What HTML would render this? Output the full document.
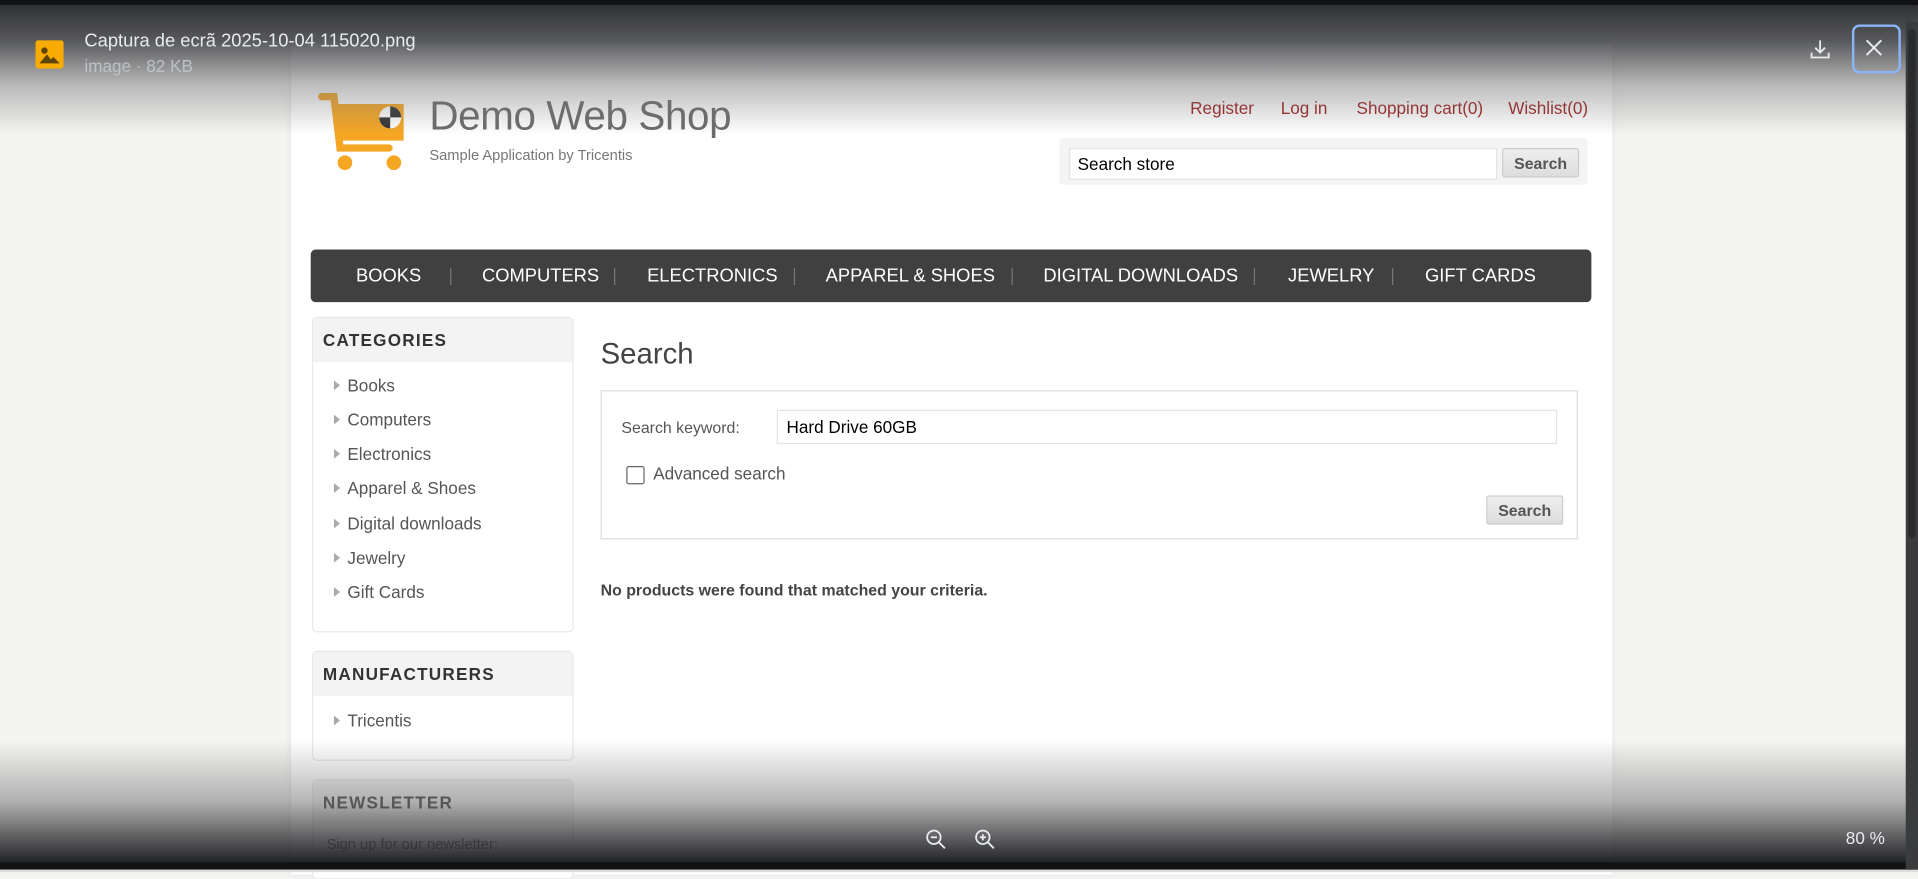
<!DOCTYPE html>
<html><head><meta charset="utf-8"><style>
html,body{margin:0;padding:0;width:1918px;height:872px;overflow:hidden;background:#f4f4f2}
#w{position:absolute;left:0;top:0;width:1568px;height:713px;transform:scale(1.2232);transform-origin:0 0;font-family:"Liberation Sans",Arial,sans-serif;background:#f4f4f2}
.a{position:absolute}
.page{left:238px;top:35px;width:1080px;height:680px;background:#fff;box-shadow:0 0 6px rgba(0,0,0,.08)}
.lnk{color:#9e1d1d;font-size:14px;top:80px}
.nav{left:254px;top:204px;width:1047px;height:43px;background:#404040;border-radius:4px}
.nav span{position:absolute;top:13px;color:#fff;font-size:15px}
.sep{position:absolute;top:15px;width:1px;height:14px;background:#777}
.blk{left:255px;width:212px;border:1px solid #e8e8e8;border-radius:4px;background:#fff}
.bh{height:36px;background:#f3f3f3;font-weight:bold;font-size:14px;letter-spacing:1px;color:#333;padding:10px 0 0 8px;box-sizing:border-box}
.it{position:absolute;left:28px;font-size:14px;color:#555}
.it:before{content:"";position:absolute;left:-11px;top:4px;border-left:5px solid #aaa;border-top:4px solid transparent;border-bottom:4px solid transparent}
.btn{background:linear-gradient(#eee,#ddd);border:1px solid #ccc;border-radius:2px;font-weight:bold;color:#555;font-size:13px;text-align:center;box-sizing:border-box;padding-top:4px}
</style></head><body><div id="w">
<div class="a page"></div>
<svg class="a" style="left:260px;top:75px" width="72" height="66" viewBox="0 0 72 66">
<path d="M3 4h10l5 42h40" fill="none" stroke="#f5a623" stroke-width="6" stroke-linecap="round"/>
<path d="M13 10h57v30H18z" fill="#f5a623"/>
<circle cx="22" cy="58" r="6" fill="#f5a623"/><circle cx="62" cy="58" r="6" fill="#f5a623"/>
<circle cx="59" cy="21" r="9" fill="#fff"/><path d="M59 12a9 9 0 0 1 9 9h-9zM59 21v9a9 9 0 0 1-9-9z" fill="#333"/>
</svg>
<div class="a" style="left:351px;top:76px;font-size:33px;color:#6a6a6a;letter-spacing:-0.3px">Demo Web Shop</div>
<div class="a" style="left:351px;top:120px;font-size:12px;color:#777">Sample Application by Tricentis</div>
<div class="a lnk" style="left:973px">Register</div>
<div class="a lnk" style="left:1047px">Log in</div>
<div class="a lnk" style="left:1109px">Shopping cart(0)</div>
<div class="a lnk" style="left:1233px">Wishlist(0)</div>
<div class="a" style="left:866px;top:113px;width:432px;height:38px;background:#f4f4f4;border-radius:3px"></div>
<div class="a" style="left:874px;top:121px;width:350px;height:26px;background:#fff;border:1px solid #e3e3e3;box-sizing:border-box;font-size:14px;padding:4px 6px;color:#000">Search store</div>
<div class="a btn" style="left:1228px;top:121px;width:63px;height:24px">Search</div>
<div class="a nav">
<span style="left:37px">BOOKS</span><i class="sep" style="left:114px"></i>
<span style="left:140px">COMPUTERS</span><i class="sep" style="left:248px"></i>
<span style="left:275px">ELECTRONICS</span><i class="sep" style="left:395px"></i>
<span style="left:421px">APPAREL &amp; SHOES</span><i class="sep" style="left:573px"></i>
<span style="left:599px">DIGITAL DOWNLOADS</span><i class="sep" style="left:771px"></i>
<span style="left:799px">JEWELRY</span><i class="sep" style="left:884px"></i>
<span style="left:911px">GIFT CARDS</span>
</div>
<div class="a blk" style="top:259px;height:256px"><div class="bh">CATEGORIES</div>
<div class="it" style="top:47px">Books</div><div class="it" style="top:75px">Computers</div><div class="it" style="top:103px">Electronics</div><div class="it" style="top:131px">Apparel &amp; Shoes</div><div class="it" style="top:160px">Digital downloads</div><div class="it" style="top:188px">Jewelry</div><div class="it" style="top:216px">Gift Cards</div></div>
<div class="a blk" style="top:532px;height:88px"><div class="bh">MANUFACTURERS</div><div class="it" style="top:48px">Tricentis</div></div>
<div class="a blk" style="top:637px;height:80px"><div class="bh">NEWSLETTER</div><div style="position:absolute;left:11px;top:45px;font-size:12px;color:#555">Sign up for our newsletter:</div></div>
<div class="a" style="left:491px;top:276px;font-size:24px;color:#444">Search</div>
<div class="a" style="left:491px;top:319px;width:799px;height:122px;border:1px solid #ddd;box-sizing:border-box"></div>
<div class="a" style="left:508px;top:342px;font-size:13px;color:#555">Search keyword:</div>
<div class="a" style="left:635px;top:335px;width:638px;height:28px;border:1px solid #e3e3e3;box-sizing:border-box;font-size:14px;padding:5px 7px;color:#000">Hard Drive 60GB</div>
<div class="a" style="left:512px;top:381px;width:13px;height:13px;border:1px solid #666;border-radius:2px"></div>
<div class="a" style="left:534px;top:379px;font-size:14px;color:#555">Advanced search</div>
<div class="a btn" style="left:1215px;top:405px;width:63px;height:24px">Search</div>
<div class="a" style="left:491px;top:475px;font-size:13px;font-weight:bold;color:#444">No products were found that matched your criteria.</div>
<div class="a" style="left:0;top:0;width:1568px;height:110px;background:linear-gradient(#2a2b2d 0%,rgba(60,61,64,.85) 30%,rgba(120,120,122,.5) 62%,rgba(255,255,255,0) 100%)"></div>
<div class="a" style="left:0;top:0;width:1568px;height:4px;background:#111214"></div>
<div class="a" style="left:0;top:605px;width:1568px;height:101px;background:linear-gradient(rgba(255,255,255,0) 0%,rgba(120,120,122,.55) 50%,#1f2022 100%)"></div>
<div class="a" style="left:0;top:705px;width:1568px;height:6px;background:#111214"></div>
<div class="a" style="left:0;top:711px;width:1568px;height:2px;background:#ddd"></div>
<div class="a" style="left:1558px;top:18px;width:10px;height:693px;background:#3a3b3d"></div>
<div class="a" style="left:1560px;top:24px;width:6px;height:416px;background:#2a2b2d;border-radius:3px"></div>
<svg class="a" style="left:28px;top:32px" width="25" height="25" viewBox="0 0 24 24"><rect x="1" y="1" width="22" height="22" rx="2" fill="#f9ab00"/><circle cx="8" cy="9" r="2.5" fill="#5f4300"/><path d="M4 19l6-7 3 4 2-2 5 5z" fill="#5f4300"/></svg>
<div class="a" style="left:69px;top:25px;font-size:15px;color:#e8eaed">Captura de ecrã 2025-10-04 115020.png</div>
<div class="a" style="left:69px;top:46px;font-size:14px;color:#bdc1c6">image · 82 KB</div>
<svg class="a" style="left:1478px;top:30px" width="20" height="20" viewBox="0 0 20 20" fill="none" stroke="#e8eaed" stroke-width="1.5"><path d="M10 3v10M6 9l4 4 4-4M3 13v4h14v-4"/></svg>
<div class="a" style="left:1514px;top:20px;width:36px;height:36px;border:2px solid #8ab4f8;border-radius:6px"></div>
<svg class="a" style="left:1524px;top:31px" width="16" height="16" viewBox="0 0 16 16" stroke="#e8eaed" stroke-width="1.6"><path d="M2 2l12 12M14 2L2 14"/></svg>
<svg class="a" style="left:756px;top:677px" width="18" height="18" viewBox="0 0 18 18" fill="none" stroke="#e8eaed" stroke-width="1.5"><circle cx="7.5" cy="7.5" r="5.5"/><path d="M11.5 11.5l5 5M5 7.5h5"/></svg>
<svg class="a" style="left:796px;top:677px" width="18" height="18" viewBox="0 0 18 18" fill="none" stroke="#e8eaed" stroke-width="1.5"><circle cx="7.5" cy="7.5" r="5.5"/><path d="M11.5 11.5l5 5M5 7.5h5M7.5 5v5"/></svg>
<div class="a" style="left:1509px;top:677px;font-size:14px;color:#e8eaed">80 %</div>
</div></body></html>
